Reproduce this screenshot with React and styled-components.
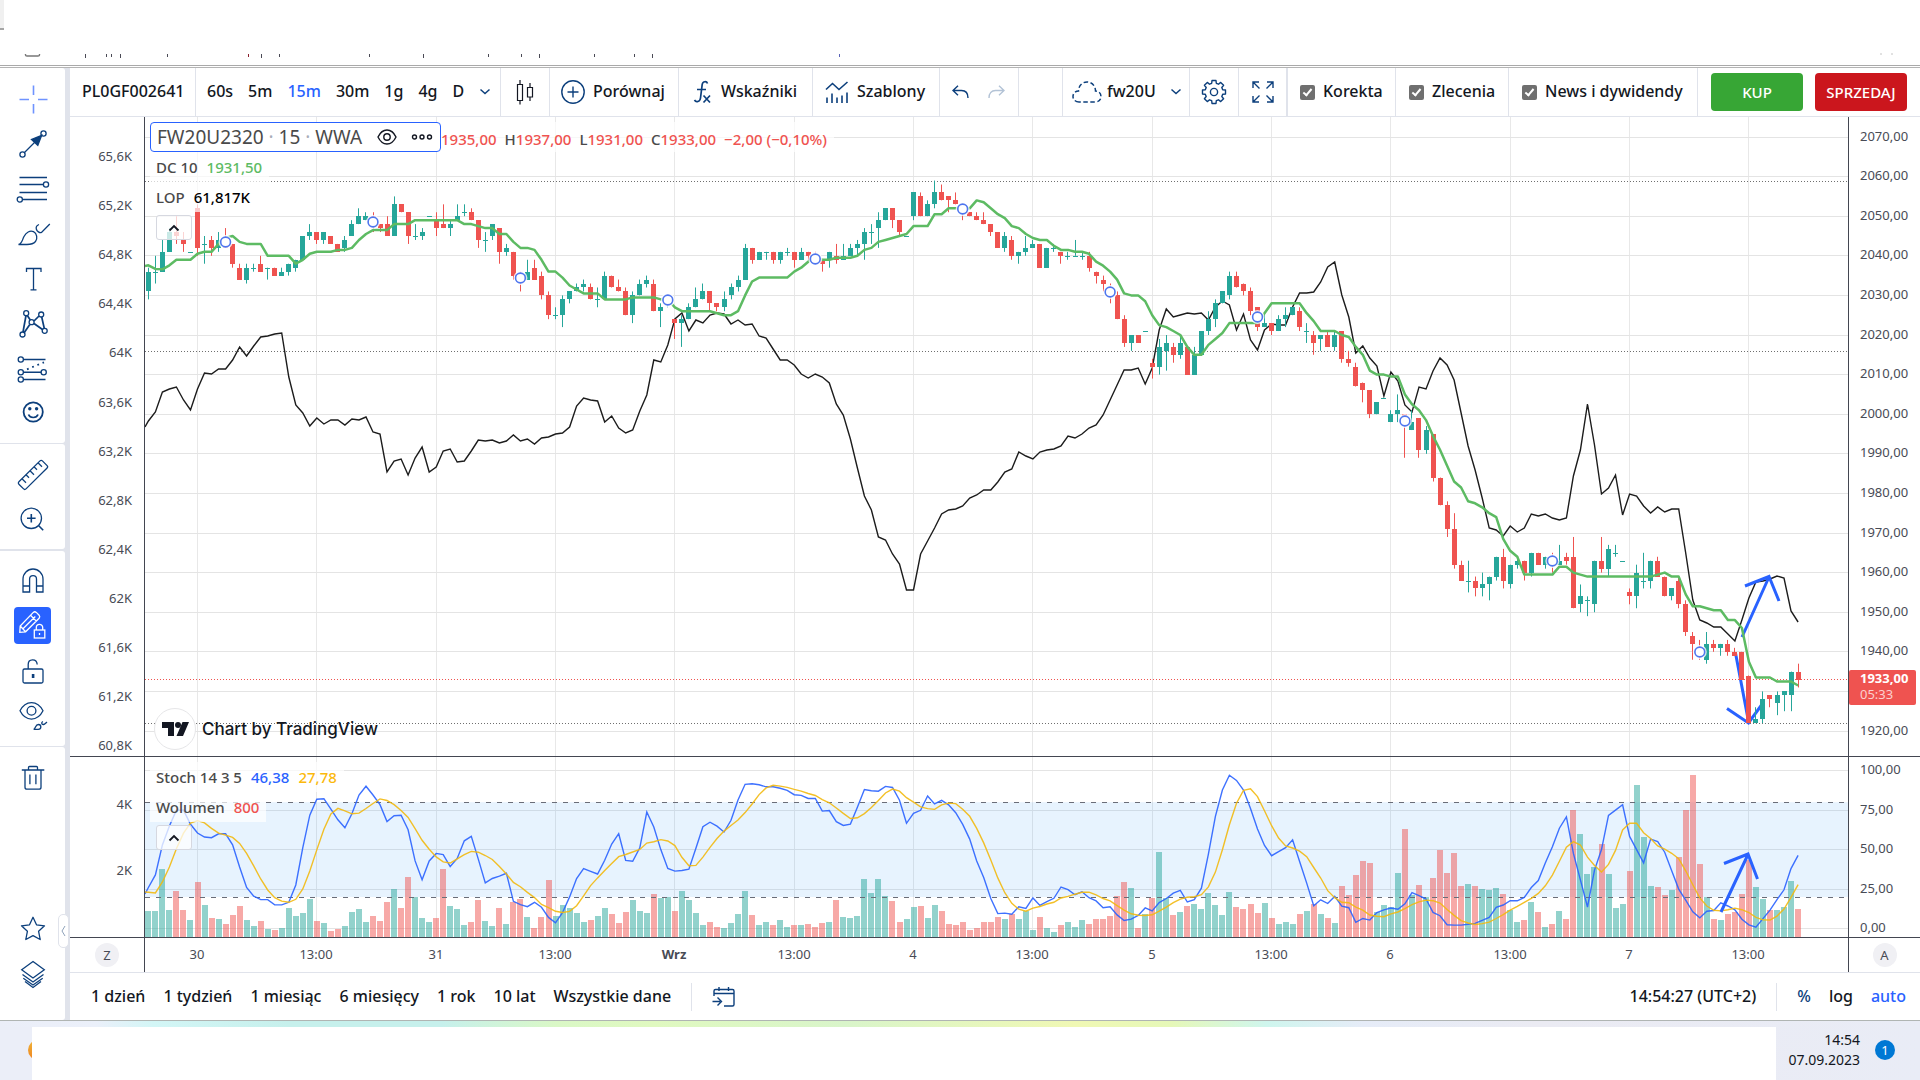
import React from "react";
import styled, { createGlobalStyle, css } from "styled-components";

/* ---------- market data ---------- */

// open, high, low, close for every 15-minute bar
const CANDLES = `
2031 2037 2029 2036|2036 2040 2033 2036|2036 2044 2036 2041|2041 2047 2041 2046|2046 2050 2043 2045|2044 2046 2041 2043|2041 2041 2041 2041|2052 2053 2040 2042|2043 2045 2038 2043|2044 2045 2040 2042
2042 2046 2041 2044|2044 2047 2042 2042|2043 2043 2037 2038|2037 2038 2034 2034|2034 2038 2033 2037|2037 2038 2036 2037|2038 2040 2036 2036|2037 2037 2034 2037|2037 2037 2035 2035|2035 2037 2035 2036
2036 2038 2035 2038|2037 2039 2036 2039|2039 2045 2039 2045|2045 2048 2044 2046|2046 2046 2043 2044|2044 2046 2043 2046|2045 2045 2043 2043|2043 2043 2041 2041|2042 2045 2041 2044|2045 2049 2045 2048
2048 2052 2048 2050|2049 2051 2049 2050|2050 2051 2046 2048|2048 2048 2046 2047|2048 2050 2045 2045|2045 2055 2045 2053|2053 2053 2051 2051|2051 2051 2043 2045|2045 2048 2044 2045|2045 2047 2044 2046
2050 2050 2050 2050|2049 2051 2045 2047|2048 2053 2047 2047|2047 2049 2045 2048|2049 2053 2049 2050|2051 2053 2050 2051|2051 2052 2049 2049|2049 2049 2042 2044|2044 2046 2041 2044|2045 2048 2044 2048
2047 2047 2038 2041|2041 2043 2040 2042|2041 2041 2034 2035|2035 2036 2031 2034|2034 2039 2034 2036|2037 2039 2034 2034|2035 2036 2029 2030|2030 2031 2024 2025|2025 2027 2024 2025|2025 2030 2022 2029
2029 2031 2028 2031|2031 2033 2031 2032|2032 2034 2031 2033|2032 2033 2029 2029|2029 2032 2027 2029|2029 2036 2029 2035|2035 2035 2032 2032|2032 2034 2031 2031|2031 2032 2025 2025|2025 2031 2023 2030
2030 2034 2030 2033|2033 2035 2032 2034|2033 2034 2026 2026|2026 2028 2022 2027|2029 2030 2027 2029|2024 2024 2019 2023|2023 2025 2017 2024|2024 2028 2024 2027|2027 2032 2027 2029|2029 2033 2029 2031
2031 2031 2026 2028|2028 2028 2026 2027|2027 2031 2026 2029|2030 2033 2029 2032|2032 2035 2031 2034|2034 2043 2034 2042|2042 2042 2038 2039|2039 2041 2039 2041|2041 2041 2039 2041|2041 2041 2038 2039
2039 2041 2038 2041|2041 2042 2040 2041|2041 2041 2037 2039|2039 2042 2039 2041|2041 2041 2039 2040|2040 2041 2039 2039|2039 2039 2036 2038|2039 2041 2037 2041|2040 2043 2038 2039|2039 2043 2039 2040
2040 2043 2040 2042|2042 2044 2040 2043|2043 2047 2039 2046|2046 2048 2043 2046|2047 2051 2042 2049|2049 2052 2049 2052|2052 2052 2047 2049|2049 2049 2045 2046|2045 2045 2045 2045|2050 2056 2049 2056
2055 2056 2050 2050|2050 2054 2050 2053|2053 2059 2052 2056|2056 2058 2054 2054|2055 2055 2051 2054|2054 2056 2053 2053|2052 2053 2049 2051|2051 2051 2050 2050|2050 2051 2049 2049|2049 2051 2048 2048
2048 2048 2045 2046|2046 2046 2042 2042|2042 2046 2041 2045|2044 2045 2039 2040|2040 2041 2038 2041|2041 2045 2040 2042|2042 2044 2042 2043|2043 2043 2037 2037|2037 2042 2037 2042|2042 2043 2041 2042
2041 2041 2038 2040|2040 2041 2039 2040|2040 2044 2040 2040|2040 2041 2039 2040|2040 2041 2036 2037|2036 2036 2033 2035|2034 2035 2031 2033|2032 2033 2028 2030|2030 2031 2024 2024|2024 2025 2017 2018
2018 2020 2016 2020|2020 2020 2018 2018|2021 2021 2021 2021|2013 2014 2009 2012|2012 2019 2010 2017|2016 2020 2011 2018|2017 2018 2013 2015|2015 2020 2014 2018|2017 2017 2010 2010|2010 2017 2010 2015
2015 2021 2015 2021|2021 2026 2020 2024|2024 2029 2022 2028|2028 2031 2028 2031|2030 2036 2029 2035|2035 2036 2032 2032|2033 2033 2030 2031|2031 2032 2025 2026|2027 2027 2021 2022|2022 2025 2022 2023
2023 2023 2020 2021|2021 2025 2021 2024|2024 2027 2022 2025|2025 2027 2025 2027|2026 2027 2021 2022|2021 2023 2018 2021|2020 2021 2015 2018|2019 2020 2016 2020|2020 2021 2017 2017|2017 2021 2016 2020
2021 2021 2013 2014|2014 2016 2012 2013|2012 2013 2007 2007|2008 2008 2003 2006|2006 2006 1999 2000|2000 2003 2000 2003|2004 2004 2004 2004|1998 2001 1998 2000|2000 2005 1998 2001|2000 2000 1989 1998
1996 2001 1996 1998|1999 1999 1989 1991|1991 1997 1990 1996|1995 1995 1983 1984|1984 1984 1977 1977|1977 1978 1969 1971|1971 1975 1961 1962|1962 1963 1958 1958|1958 1963 1955 1958|1958 1959 1954 1956
1956 1960 1954 1957|1957 1959 1953 1959|1959 1964 1958 1964|1964 1966 1956 1958|1957 1962 1956 1962|1962 1964 1961 1963|1963 1963 1958 1960|1960 1965 1959 1965|1965 1965 1962 1962|1962 1964 1961 1964
1964 1965 1960 1962|1962 1967 1962 1963|1964 1965 1962 1963|1964 1969 1951 1951|1952 1957 1950 1954|1953 1954 1949 1953|1952 1963 1950 1963|1963 1969 1960 1961|1961 1967 1959 1966|1965 1967 1964 1965
1963 1963 1963 1963|1955 1956 1952 1954|1954 1962 1951 1960|1958 1965 1956 1958|1958 1963 1956 1963|1963 1964 1959 1959|1959 1959 1954 1954|1954 1956 1953 1956|1958 1959 1951 1952|1952 1953 1944 1945
1944 1945 1938 1942|1941 1943 1938 1939|1938 1945 1937 1942|1942 1943 1940 1941|1941 1942 1939 1942|1942 1943 1939 1940|1940 1941 1939 1939|1940 1940 1933 1933|1934 1934 1922 1922|1922 1926 1922 1923
1923 1930 1922 1928|1929 1929 1926 1928|1927 1930 1924 1929|1929 1930 1925 1930|1929 1935 1925 1935|1935 1937 1931 1933`
  .trim()
  .split(/[|\n]/)
  .map((bar) => bar.trim().split(" ").map(Number));

const nums = (text) => text.trim().split(/\s+/).map(Number);

// open-interest curve, vertical position on its own left-hand scale
const LOP = nums(`
421 412 392 389 387 400 410 389 373 374
369 369 360 347 356 346 337 336 334 333
377 405 413 426 418 424 420 420 425 419
420 417 432 434 472 461 459 475 458 447
472 467 451 449 462 461 451 440 441 440
443 441 435 441 439 444 438 437 434 433
427 406 398 400 401 422 416 428 433 430
411 395 360 362 345 319 313 331 320 323
315 313 314 324 320 325 324 336 338 349
360 360 365 374 378 374 377 383 404 415
439 468 496 510 537 540 554 564 590 590
554 541 528 514 510 509 506 498 495 490
490 482 472 469 452 456 459 452 450 449
446 436 438 434 428 425 415 400 385 370
370 368 384 368 330 309 317 315 313 314
313 320 307 301 305 330 314 340 350 330
324 325 325 307 293 293 292 282 267 262
295 317 353 346 358 366 396 372 381 405
412 387 389 371 358 365 380 413 446 470
498 528 530 536 526 532 528 514 516 514
518 520 518 476 450 404 445 494 488 475
515 494 496 506 513 507 512 509 509 553
600 620 623 627 627 634 641 620 598 582
581 579 576 578 611 622`);

const VOLUME = nums(`
26 26 68 27 46 27 17 55 32 19
18 13 22 31 17 11 16 8 7 9
29 21 24 38 16 14 6 8 11 25
28 15 21 16 35 48 29 60 40 19
15 19 68 31 28 12 15 37 16 11
29 13 35 38 20 9 20 57 21 32
29 24 15 17 21 29 23 14 25 37
26 24 43 39 40 26 46 37 24 12
15 10 9 14 23 46 22 12 15 12
17 10 12 12 13 10 14 15 37 20
19 21 58 44 58 41 36 15 18 30
31 19 32 26 13 12 15 7 9 15
15 20 18 23 18 26 7 20 9 5
12 15 10 17 13 18 18 21 41 55
49 9 23 39 85 39 22 25 31 33
28 44 32 22 45 30 28 33 24 34
19 13 15 13 23 26 33 23 19 14
51 42 62 76 74 25 32 30 64 108
42 52 40 59 87 64 84 51 53 51
48 47 49 43 27 15 17 35 25 10
13 26 18 127 103 63 70 93 63 29
33 66 152 100 51 50 42 47 80 127
162 73 40 18 17 23 25 43 77 50
38 27 27 30 56 28`);

const DC_HEAD = [2037.6, 2036.7, 2036.6, 2037.6, 2039, 2039, 2039, 2040.5, 2041];
const K_HEAD = [26, 34, 53, 65, 75, 75, 66, 60.5, 58, 57.5, 60, 60, 53, 39, 26, 20.5];
const D_HEAD = [23, 22.5, 29.5, 39];

const SESSION_MARKS = [
  [11, 242], [32, 222], [53, 278], [74, 300], [95, 259], [116, 209],
  [137, 292], [158, 317], [179, 421], [200, 561], [221, 652],
];

/* ---------- scales and indicators ---------- */

const TOP = 117;
const LEFT = 145;
const PANE_TOP = 757;
const barX = (i) => 197.5 - LEFT + (i - 7) * 7.02;
const priceY = (p) => 20 + (2070 - p) * 3.96;
const stochY = (v) => 171.6 - v * 1.58;

const highest = (i, n) => Math.max(...CANDLES.slice(i - n + 1, i + 1).map((c) => c[1]));
const lowest = (i, n) => Math.min(...CANDLES.slice(i - n + 1, i + 1).map((c) => c[2]));
const mean = (list) => list.reduce((a, b) => a + b, 0) / list.length;

const DC = CANDLES.map((_, i) => (i < 9 ? DC_HEAD[i] : (highest(i, 10) + lowest(i, 10)) / 2));
const RAW_K = CANDLES.map((c, i) => {
  if (i < 13) return 0;
  const lo = lowest(i, 14);
  return ((c[3] - lo) / (highest(i, 14) - lo)) * 100;
});
const K = CANDLES.map((_, i) => (i < 16 ? K_HEAD[i] : mean(RAW_K.slice(i - 2, i + 1))));
const D = CANDLES.map((_, i) => (i < 4 ? D_HEAD[i] : mean(K.slice(i - 4, i + 1))));

const toPoints = (list, fy) => list.map((v, i) => `${barX(i).toFixed(1)},${fy(v).toFixed(1)}`).join(" ");

const UP = "#26a69a";
const DOWN = "#ef5350";
const BLUE = "#2962ff";
const NAVY = "#0c3f7c";
const INK = "#131722";
const RULE = "#e0e3eb";
const AXIS = "#434651";

const GRID_X = Array.from({ length: 14 }, (_, n) => Math.floor(barX(7 + 17 * n)) + 0.5);
const TIMES = ["30", "13:00", "31", "13:00", "Wrz", "13:00", "4", "13:00", "5", "13:00", "6", "13:00", "7", "13:00"];
const PRICES = Array.from({ length: 16 }, (_, n) => 2070 - n * 10);
const LOP_LABELS = ["65,6K", "65,2K", "64,8K", "64,4K", "64K", "63,6K", "63,2K", "62,8K", "62,4K", "62K", "61,6K", "61,2K", "60,8K"];
const PERCENTS = [100, 75, 50, 25, 0];

/* ---------- styles ---------- */

const GlobalStyle = createGlobalStyle`
  *, *::before, *::after { box-sizing: border-box; }
  body { margin: 0; background: #fff; }
  body, button, input { font-family: "Noto Sans", "Open Sans", sans-serif; }
  button { border: 0; margin: 0; padding: 0; background: none; color: inherit; cursor: pointer; }
  svg { display: block; }
`;

const Page = styled.div`
  display: flex;
  flex-direction: column;
  min-height: 100vh;
  color: ${INK};
`;

const BrowserStrip = styled.header`
  height: 68px;
  border-bottom: 1px solid #b4b4b4;
  overflow: hidden;
`;

const StripInner = styled.div`
  height: 66px;
  border-bottom: 1px solid #a9a9a9;
`;

const Workspace = styled.main`
  flex: 1;
  display: flex;
`;

const SideBar = styled.nav`
  flex: none;
  width: 70px;
  position: relative;
  display: flex;
  flex-direction: column;
  background: ${RULE};
  border-right: 5px solid ${RULE};
`;

const ToolGroup = styled.div`
  display: flex;
  flex-direction: column;
  align-items: center;
  padding: ${(p) => p.$pad || "8px 0 7px"};
  margin-bottom: ${(p) => p.$gap || 0}px;
  background: #fff;
  border-radius: 0 3px 3px 0;
  ${(p) => p.$grow && css`
    flex: 1;
    padding-bottom: 24px;
  `}
`;

const ToolSpacer = styled.div`
  flex: 1;
`;

const ToolButton = styled.button`
  display: grid;
  place-items: center;
  width: 65px;
  height: 45px;
`;

const ToolFace = styled.span`
  display: flex;
  align-items: center;
  justify-content: center;
  width: 37px;
  height: 37px;
  border-radius: 4px;
  background: ${(p) => (p.$active ? BLUE : "transparent")};
`;

const ToolSvg = styled.svg`
  flex: none;
  width: 40px;
  height: 40px;
  fill: none;
  stroke: ${(p) => p.$color || NAVY};
  stroke-width: 1.3;
`;

const CollapseHandle = styled.button`
  position: absolute;
  right: -4px;
  bottom: 72px;
  display: grid;
  place-items: center;
  width: 11px;
  height: 34px;
  background: #fff;
  border: 1px solid ${RULE};
  border-radius: 5px;
`;

const Board = styled.section`
  flex: 1;
  min-width: 0;
  display: flex;
  flex-direction: column;
`;

const TopBar = styled.div`
  display: flex;
  height: 49px;
  border-bottom: 1px solid ${RULE};
  font-size: 16px;
  font-weight: 500;
  line-height: 24px;
`;

const Section = styled.div`
  flex: none;
  display: flex;
  align-items: center;
  width: ${(p) => p.$w}px;
  padding-left: ${(p) => p.$pad || 0}px;
  gap: ${(p) => p.$gap || 8}px;
  justify-content: ${(p) => (p.$center ? "center" : "flex-start")};
  border-right: ${(p) => p.$edge || 1}px solid ${RULE};
  white-space: nowrap;
`;

const BarButton = styled.button`
  display: flex;
  align-items: center;
  gap: ${(p) => p.$gap || 8}px;
  font-size: 16px;
  font-weight: 500;
  line-height: 24px;
  white-space: nowrap;
  color: ${(p) => (p.$on ? BLUE : p.$navy ? NAVY : INK)};
`;

const Caption = styled.span`
  padding-bottom: 2px;
`;

const BarSvg = styled.svg`
  flex: none;
  fill: none;
  stroke: ${(p) => p.$color || NAVY};
  stroke-width: 1.4;
`;

const CheckLabel = styled.label`
  display: flex;
  align-items: center;
  gap: 8px;
`;

const CheckBox = styled.input`
  appearance: none;
  display: grid;
  place-items: center;
  width: 15px;
  height: 15px;
  margin: 0;
  border-radius: 2px;
  background: #6f6f6f;
  &:checked::after {
    content: "";
    width: 5px;
    height: 9px;
    margin-bottom: 2px;
    border: solid #fff;
    border-width: 0 2px 2px 0;
    transform: rotate(40deg);
  }
`;

const Trade = styled.div`
  display: flex;
  flex: 1;
  align-items: center;
  gap: 12px;
  padding: 0 12px 0 13px;
`;

const TradeButton = styled.button`
  flex: 1;
  height: 38px;
  max-width: 92px;
  border-radius: 4px;
  color: #fff;
  font-size: 15px;
  font-weight: 500;
  background: ${(p) => (p.$sell ? "#cb161d" : "#37a635")};
`;

const ChartGrid = styled.div`
  flex: 1;
  display: grid;
  grid-template-columns: 75px minmax(0, 1fr) 72px;
  grid-template-rows: minmax(640px, 1fr) 181px 34px;
`;

const Cell = styled.div`
  position: relative;
  overflow: hidden;
  border-bottom: ${(p) => (p.$last ? "0" : `1px solid ${AXIS}`)};
  border-right: ${(p) => (p.$side === "left" ? `1px solid ${AXIS}` : "0")};
  border-left: ${(p) => (p.$side === "right" ? `1px solid ${AXIS}` : "0")};
`;

const Plot = styled.svg`
  width: 100%;
  height: ${(p) => p.$h}px;
`;

const AxisText = styled.text`
  font-family: "Noto Sans", sans-serif;
  font-size: 13px;
  font-weight: ${(p) => (p.$bold ? 700 : 400)};
  fill: ${(p) => p.$fill || "#484b55"};
`;

const Legend = styled.div`
  position: absolute;
  top: 5px;
  left: 5px;
  display: flex;
  flex-direction: column;
  align-items: flex-start;
`;

const LegendRow = styled.div`
  display: flex;
  align-items: center;
  gap: 9px;
  height: 30px;
  padding: 0 7px 0 6px;
  font-size: 15px;
  font-weight: 500;
  line-height: 20px;
  color: #4a4a4a;
  background: rgba(255, 255, 255, 0.7);
  white-space: nowrap;
  ${(p) => p.$first && css`
    padding-left: 0;
    gap: 0;
  `}
`;

const SymbolBox = styled.div`
  display: flex;
  align-items: center;
  width: 291px;
  height: 30px;
  padding: 0 7px 0 6px;
  border: 1px solid ${BLUE};
  border-radius: 4px;
  background: #fff;
  font-size: 19px;
  font-weight: 400;
  line-height: 24px;
`;

const SymbolName = styled.span`
  flex: 1;
  i {
    font-style: normal;
    color: #a9adb8;
  }
`;

const IconButton = styled.button`
  display: grid;
  place-items: center;
  margin-left: 14px;
`;

const Quotes = styled.div`
  display: flex;
  gap: 8px;
  padding-top: 4px;
`;

const Value = styled.span`
  color: ${(p) => p.$c || DOWN};
`;

const Chevron = styled.button`
  display: grid;
  place-items: center;
  width: 36px;
  height: 25px;
  margin: 3px 0 0 6px;
  border: 1px solid #d6d8e0;
  border-radius: 3px;
  background: rgba(255, 255, 255, 0.75);
`;

const Brand = styled.a`
  position: absolute;
  left: 9px;
  bottom: 6px;
  display: flex;
  align-items: center;
  gap: 6px;
  color: ${INK};
  font: 500 17px/24px "Inter", sans-serif;
  text-decoration: none;
`;

const BrandMark = styled.span`
  display: grid;
  place-items: center;
  width: 42px;
  height: 42px;
  border: 1px solid #e6e6e8;
  border-radius: 50%;
  background: #fff;
`;

const AxisButton = styled.button`
  display: block;
  width: 24px;
  height: 24px;
  margin: 5px auto 0;
  border-radius: 50%;
  background: #f0f0f4;
  color: #484b55;
  font-size: 13px;
`;

const BottomBar = styled.div`
  display: flex;
  align-items: center;
  height: 48px;
  padding: 0 14px 0 21px;
  border-top: 1px solid ${RULE};
`;

const Ranges = styled.div`
  display: flex;
  gap: 18px;
`;

const Divider = styled.span`
  width: 1px;
  height: 28px;
  margin: 0 20px;
  background: ${RULE};
`;

const Spacer = styled.span`
  flex: 1;
`;

const TaskBar = styled.footer`
  display: flex;
  align-items: stretch;
  height: 60px;
  padding-top: 6px;
  border-top: 1px solid #b0b5b3;
  background: linear-gradient(90deg, #ebeef8 0, #ebf0fa 5%, #d3f6f6 8%, #c6f0ec 15%, #c6f0ec 23%, #daf8c6 29%, #e0f9c0 34%, #d9f5ca 44%, #f0f8b4 56%, #e6f8b8 61%, #cff6ee 66%, #e6ecf8 71%, #ebebf3 80%, #e9ecf6 100%);
`;

const TaskStart = styled.div`
  flex: none;
  display: flex;
  align-items: center;
  width: 32px;
  padding: 0 0 7px 28px;
  overflow: hidden;
  background: #ebeef8;
`;

const AppDot = styled.span`
  flex: none;
  width: 20px;
  height: 20px;
  border-radius: 50%;
  background: linear-gradient(#eeb53a, #f0831f);
`;

const TaskBlank = styled.div`
  flex: 1;
  background: #fff;
`;

const TaskTray = styled.div`
  flex: none;
  display: flex;
  align-items: center;
  justify-content: flex-end;
  gap: 15px;
  width: 144px;
  padding: 0 25px 8px 0;
`;

const Clock = styled.div`
  font-size: 14px;
  line-height: 20px;
  text-align: right;
`;

const Badge = styled.span`
  display: grid;
  place-items: center;
  width: 20px;
  height: 20px;
  border-radius: 50%;
  background: #0078d4;
  color: #fff;
  font-size: 13px;
`;

/* ---------- side bar icons ---------- */

const ruler = [0, 1, 2, 3, 4];

const TOOLS = {
  cross: <path d="M6.5 20.5H16M25 20.5h9.500M20.500 6.500v9.500M20.500 25v9.500" strokeWidth="1.600" />,
  trend: (
    <>
      <circle cx="9.500" cy="30.500" r="2.600" /><circle cx="30.500" cy="9.500" r="2.600" />
      <path d="M11.500 28.500L23 17" /><path d="M28.700 11.300L18.500 15.500l6.300 5.800z" fill={NAVY} />
    </>
  ),
  fib: (
    <>
      <path d="M6.500 8.500H34M6.500 15.500h23.700M6.500 23.500H34M9.500 30.500H34" strokeWidth="1.600" />
      <circle cx="33" cy="15.500" r="2.600" /><circle cx="6.800" cy="30.500" r="2.600" />
    </>
  ),
  brush: <path d="M5.500 30.500c3.500-.7 3.500-4 5.500-8s6-6.500 9.500-4.800 4.300 6.800 2 9.800c-2.300 2.700-5 3-8.500 3zM26 10.500c-2 .8-3.200 2.300-2.700 4.500.5 2.400 3.300 4.200 5.200 3.500L36.800 10" />,
  text: <path d="M13.500 13V9.500h14.500V13M20.500 9.500v21.300M17.500 30.800h6" />,
  pattern: (
    <>
      <path d="M13 11.500L10 28M14.300 11.500l3 4.500M11.300 28.500l5.500-8M21 17l5-5M28.700 13l2.600 11.500M21 19.500l8.500 6" strokeWidth="1.700" />
      <circle cx="13.200" cy="9.200" r="2.500" /><circle cx="28.200" cy="10.500" r="2.500" /><circle cx="18.600" cy="18.200" r="2.500" />
      <circle cx="9.500" cy="30.500" r="2.500" /><circle cx="31.700" cy="26.800" r="2.500" />
    </>
  ),
  forecast: (
    <>
      <path d="M10.500 10.500h22M10.500 23.300h17.800M10.500 30.500h22" strokeWidth="1.500" />
      <path d="M14 20.300l17-7" strokeWidth="1.800" strokeDasharray="1.800 3.800" />
      <circle cx="7.800" cy="10.500" r="2.600" /><circle cx="7.800" cy="23.300" r="2.600" />
      <circle cx="30.700" cy="23.300" r="2.600" /><circle cx="7.800" cy="30.500" r="2.600" />
    </>
  ),
  smile: (
    <>
      <circle cx="20.200" cy="18" r="9.600" strokeWidth="1.800" />
      <circle cx="16.800" cy="14.800" r="1.700" fill={NAVY} stroke="none" /><circle cx="23.600" cy="14.800" r="1.700" fill={NAVY} stroke="none" />
      <path d="M15.500 20.500c1.500 4 8 4 9.500 0" strokeWidth="1.700" />
    </>
  ),
  ruler: (
    <>
      <path d="M27 5.900q1.200-1.200 2.400 0l4.700 4.700q1.200 1.200 0 2.400L13 33.900q-1.200 1.200-2.400 0l-4.700-4.700q-1.200-1.200 0-2.400z" />
      {ruler.map((n) => <path key={n} d={`M${9 + n * 4} ${23.7 - n * 4}l${n % 2 ? 3 : 4} ${n % 2 ? 3 : 4}`} />)}
    </>
  ),
  zoom: <><circle cx="18.300" cy="18.300" r="10.200" /><path d="M14 18.300h8.600M18.300 14v8.600M25.500 25.500l4.700 4.700" strokeWidth="1.600" /></>,
  magnet: <path d="M10 31V18a10 10 0 0 1 20 0v13h-6.500V18a3.400 3.400 0 0 0-6.900 0v13zM10 25h6.600M23.500 25H30" />,
  pencil: (
    <>
      <path d="M6.800 26.300l.4-6.300L20.300 6.400q1.500-1.300 3 0l2.800 2.800q1.300 1.500 0 3L12.600 25.800zM7.200 20l5.400 5.800M17.500 9.300l5.800 5.800M10 22.800L22.300 10.500" />
      <rect x="21.300" y="24" width="10.500" height="8" /><path d="M23.300 24v-2.500a3.200 3.200 0 0 1 6.400 0V24M26.500 27v2" />
    </>
  ),
  lock: <><rect x="10" y="18" width="20" height="14" rx="1.500" /><path d="M15.200 18v-4.500c0-5.800 8.500-6.300 9 0" /><path d="M20.100 23v4" strokeWidth="2.600" /></>,
  eye: (
    <>
      <path d="M7 14.800c5.500-11 17.500-11 23 0-5.500 11-17.500 11-23 0z" /><circle cx="18.500" cy="14.800" r="4.400" />
      <path d="M20.700 33.300c2-.8 1.500-4.800 4.800-4.800 3 0 3.300 4.800-.3 4.800zM30 25.500c-2 .7-1.500 3.200.5 3 1.300-.2 2.200-1.500 3.500-2.500" />
    </>
  ),
  trash: <path d="M8.800 12h22.500M15.500 12V9.500q0-1 1-1h7q1 0 1 1V12M12 12v17.200q0 2 2 2h12q2 0 2-2V12M16.900 16.500v9.800M22.900 16.500v9.800" />,
  star: <path d="M20 8.300l3.500 7.500 8 1-5.900 5.500 1.600 8.200L20 26.600l-7.200 3.900 1.600-8.200-5.900-5.500 8-1z" strokeLinejoin="round" />,
  layers: <path d="M20 7.500L31.300 15.800 20 24 8.700 15.800zM9.500 20.500L20 28l10.500-7.500M10.300 24.300L20 31l9.700-6.700M12 27.500l8 6 8-6" />,
};

const Tool = ({ name, label, active, color }) => (
  <ToolButton type="button" aria-label={label}>
    <ToolFace $active={active}>
      <ToolSvg viewBox="0 0 40 40" $color={color} aria-hidden="true">{TOOLS[name]}</ToolSvg>
    </ToolFace>
  </ToolButton>
);

/* ---------- top bar icons ---------- */

const gearPath = Array.from({ length: 8 }, (_, n) => {
  const at = (deg, r) => {
    const a = ((n * 45 + deg) * Math.PI) / 180;
    return `${(13 + r * Math.cos(a)).toFixed(1)} ${(13 + r * Math.sin(a)).toFixed(1)}`;
  };
  return `${n ? "L" : "M"}${at(-15, 9)}L${at(-10, 11.7)}L${at(10, 11.7)}L${at(15, 9)}`;
}).join("") + "z";

const DownIcon = () => (
  <BarSvg width="12" height="8" viewBox="0 0 12 8"><path d="M1.500 1.500L6 5.500l4.500-4" strokeWidth="1.500" /></BarSvg>
);

const UpIcon = () => (
  <BarSvg width="12" height="8" viewBox="0 0 12 8" $color={INK}><path d="M1.500 6.500L6 2l4.500 4.500" strokeWidth="1.800" /></BarSvg>
);

const INTERVALS = ["60s", "5m", "15m", "30m", "1g", "4g", "D"];
const RANGES = ["1 dzień", "1 tydzień", "1 miesiąc", "6 miesięcy", "1 rok", "10 lat", "Wszystkie dane"];

const TopToolbar = () => (
  <TopBar>
    <Section $w={126} $pad={12}><BarButton type="button"><Caption>PL0GF002641</Caption></BarButton></Section>
    <Section $w={305} $pad={11} $gap={15}>
      {INTERVALS.map((t) => <BarButton type="button" key={t} $on={t === "15m"}><Caption>{t}</Caption></BarButton>)}
      <BarButton type="button" aria-label="Więcej interwałów"><DownIcon /></BarButton>
    </Section>
    <Section $w={49} $center>
      <BarButton type="button" aria-label="Typ wykresu">
        <BarSvg width="18" height="26" viewBox="0 0 18 26" $color={INK}>
          <path d="M1.500 5.500h5v16h-5zM4 5.500V1M4 21.500V25.500M11.500 8.500h5v9.500h-5zM14 8.500V4M14 18v4" strokeWidth="1.200" />
        </BarSvg>
      </BarButton>
    </Section>
    <Section $w={129} $pad={11}>
      <BarButton type="button">
        <BarSvg width="24" height="24" viewBox="0 0 24 24"><circle cx="12" cy="12" r="11.200" /><path d="M6.500 12h11M12 6.500v11" /></BarSvg>
        <Caption>Porównaj</Caption>
      </BarButton>
    </Section>
    <Section $w={134} $pad={14}>
      <BarButton type="button">
        <BarSvg width="20" height="24" viewBox="0 0 20 24">
          <path d="M14.500 3.500c-.8-2.500-4.700-2.500-5.300.8L7.500 18c-.5 4-4.500 4.800-6 2M4 9.500h9M10.500 15.500l6.500 7M17 15.500l-6.500 7" strokeWidth="1.700" />
        </BarSvg>
        <Caption>Wskaźniki</Caption>
      </BarButton>
    </Section>
    <Section $w={127} $pad={12}>
      <BarButton type="button">
        <BarSvg width="24" height="24" viewBox="0 0 24 24">
          <path d="M1 9.500l6.500-6 6.500 6L22.500 2M2 17.500V23M7 13.500V23M12 17.500V23M17 15.500V23M22 12.500V23" strokeWidth="1.600" />
        </BarSvg>
        <Caption>Szablony</Caption>
      </BarButton>
    </Section>
    <Section $w={79} $pad={12} $gap={17}>
      <BarButton type="button" aria-label="Cofnij">
        <BarSvg width="18" height="14" viewBox="0 0 18 14"><path d="M6 .800L1 5.500l5 4.700M1 5.500h8.500c4 0 6.500 2.500 6.500 7.500" /></BarSvg>
      </BarButton>
      <BarButton type="button" aria-label="Ponów">
        <BarSvg width="18" height="14" viewBox="0 0 18 14" $color="#b3c3d6"><path d="M12 .800l5 4.700-5 4.700M17 5.500H8.500C4.500 5.500 2 8 2 13" /></BarSvg>
      </BarButton>
    </Section>
    <Section $w={44} />
    <Section $w={127} $pad={9} $gap={14}>
      <BarButton type="button" $gap={5}>
        <BarSvg width="30" height="22" viewBox="0 0 30 22">
          <path d="M7 21C3.500 21 1 18.700 1 15.500S3.500 10 6.500 10C6.500 5 10 1 15 1s8.500 4 8.500 9c3 0 5.500 2 5.500 5.500S26.500 21 23 21z" strokeDasharray="4.500 2.500" strokeWidth="1.500" />
        </BarSvg>
        <Caption>fw20U</Caption>
      </BarButton>
      <BarButton type="button" aria-label="Układy"><DownIcon /></BarButton>
    </Section>
    <Section $w={49} $center>
      <BarButton type="button" aria-label="Ustawienia">
        <BarSvg width="26" height="26" viewBox="0 0 26 26"><path d={gearPath} strokeLinejoin="round" /><circle cx="13" cy="13" r="3.600" /></BarSvg>
      </BarButton>
    </Section>
    <Section $w={49} $center $edge={2}>
      <BarButton type="button" aria-label="Pełny ekran">
        <BarSvg width="22" height="22" viewBox="0 0 22 22">
          <path d="M1 7V1h6M1 1l6.500 6.500M15 1h6v6M21 1l-6.500 6.500M1 15v6h6M1 21l6.500-6.500M21 15v6h-6M21 21l-6.500-6.500" />
        </BarSvg>
      </BarButton>
    </Section>
    <Section $w={108} $pad={12}><CheckLabel><CheckBox type="checkbox" defaultChecked /><Caption>Korekta</Caption></CheckLabel></Section>
    <Section $w={113} $pad={13}><CheckLabel><CheckBox type="checkbox" defaultChecked /><Caption>Zlecenia</Caption></CheckLabel></Section>
    <Section $w={189} $pad={13}><CheckLabel><CheckBox type="checkbox" defaultChecked /><Caption>News i dywidendy</Caption></CheckLabel></Section>
    <Trade>
      <TradeButton type="button">KUP</TradeButton>
      <TradeButton type="button" $sell>SPRZEDAJ</TradeButton>
    </Trade>
  </TopBar>
);

/* ---------- chart panes ---------- */

const Verticals = ({ h }) => GRID_X.map((x) => <path key={x} d={`M${x} 0V${h}`} stroke="#e8e8e8" />);

const PricePlot = () => (
  <Plot $h={639} role="img" aria-label="FW20U2320">
    <Verticals h={639} />
    {PRICES.map((p) => <path key={p} d={`M0 ${Math.floor(priceY(p)) + 0.5}h1703`} stroke="#e4e4e4" />)}
    {[2059, 2016, 1922].map((p) => (
      <path key={p} d={`M0 ${Math.round(priceY(p)) + 0.5}h1703`} stroke="#6f6f6f" strokeDasharray="1 2" />
    ))}
    <path d={`M0 ${Math.floor(priceY(1933)) + 0.5}h1703`} stroke={DOWN} strokeDasharray="1 2" />
    <polyline points={`0,${427 - TOP} ` + toPoints(LOP, (y) => y - TOP)} fill="none" stroke="#1c1c1c" strokeWidth="1.400" />
    <g fill="none" stroke={BLUE} strokeWidth="3">
      <path d="M1597 520l27-60M1600 469l24-9.500L1634 484" />
      <path d="M1590.500 536l13 68.500M1582 591.500l21.500 14.500L1618 586" />
    </g>
    {CANDLES.map(([o, h, l, c], i) => {
      const color = c >= o ? UP : DOWN;
      const x = Math.round(barX(i) - 0.5);
      const top = Math.round(priceY(Math.max(o, c)));
      const height = Math.max(1, Math.round(priceY(Math.min(o, c))) - top);
      return (
        <g key={i} fill={color}>
          <rect x={x} y={priceY(h)} width="1" height={(h - l) * 3.96} />
          <rect x={x - 2} y={top} width="5" height={height} />
        </g>
      );
    })}
    <polyline points={`0,149 ` + toPoints(DC, priceY)} fill="none" stroke="#5dbb63" strokeWidth="2.500" strokeLinejoin="round" />
    {SESSION_MARKS.map(([i, y]) => (
      <g key={i} fill="#fff">
        <circle cx={barX(i)} cy={y - TOP} r="7" fillOpacity="0.800" />
        <circle cx={barX(i)} cy={y - TOP} r="4.900" stroke="#4f76ee" strokeWidth="1.600" />
      </g>
    ))}
  </Plot>
);

const StochPlot = () => (
  <Plot $h={180} role="img" aria-label="Stoch">
    <Verticals h={180} />
    {PERCENTS.map((v) => <path key={v} d={`M0 ${Math.floor(stochY(v)) + 0.5}h1703`} stroke="#e4e4e4" />)}
    <rect y={stochY(80)} width="1703" height={60 * 1.58} fill="#2196f3" fillOpacity="0.110" />
    {CANDLES.map(([o, , , c], i) => (
      <rect key={i} x={Math.round(barX(i) - 3)} y={180 - VOLUME[i]} width="6" height={VOLUME[i]} fill={c >= o ? UP : DOWN} fillOpacity="0.500" />
    ))}
    {[80, 20].map((v) => (
      <path key={v} d={`M0 ${Math.floor(stochY(v)) + 0.5}h1703`} stroke="#6a6d78" strokeDasharray="5 6" />
    ))}
    <polyline points={`0,137 ` + toPoints(K, stochY)} fill="none" stroke={BLUE} strokeOpacity="0.900" strokeWidth="1.400" />
    <polyline points={`0,135 ` + toPoints(D, stochY)} fill="none" stroke="#f2b90f" strokeOpacity="0.900" strokeWidth="1.400" />
    <path d={`M1576 ${912 - PANE_TOP}l27-57.500M1579 106.500l24-9.500 9.500 25`} fill="none" stroke={BLUE} strokeWidth="3" />
  </Plot>
);

const comma = (v) => v.toFixed(2).replace(".", ",");

const Chart = () => (
  <ChartGrid>
    <Cell $side="left">
      <Plot $h={639}>
        {LOP_LABELS.map((t, n) => <AxisText key={t} x="62" y={44 + Math.round(n * 49.1)} textAnchor="end">{t}</AxisText>)}
      </Plot>
    </Cell>
    <Cell>
      <PricePlot />
      <Legend>
        <LegendRow $first>
          <SymbolBox>
            <SymbolName>FW20U2320 <i>·</i> 15 <i>·</i> WWA</SymbolName>
            <IconButton type="button" aria-label="Ukryj">
              <BarSvg width="20" height="16" viewBox="0 0 20 16" $color={INK}>
                <path d="M1 8c4.500-9.300 13.500-9.300 18 0-4.500 9.300-13.500 9.300-18 0z" /><circle cx="10" cy="8" r="3.200" />
              </BarSvg>
            </IconButton>
            <IconButton type="button" aria-label="Więcej">
              <BarSvg width="22" height="8" viewBox="0 0 22 8" $color={INK}>
                <circle cx="3.500" cy="4" r="2" /><circle cx="11" cy="4" r="2" /><circle cx="18.500" cy="4" r="2" />
              </BarSvg>
            </IconButton>
          </SymbolBox>
          <Quotes>
            <Value>1935,00</Value>
            <span>H<Value>1937,00</Value></span>
            <span>L<Value>1931,00</Value></span>
            <span>C<Value>1933,00</Value></span>
            <Value>−2,00 (−0,10%)</Value>
          </Quotes>
        </LegendRow>
        <LegendRow>DC 10<Value $c="#5dbb63">1931,50</Value></LegendRow>
        <LegendRow>LOP<Value $c="#000">61,817K</Value></LegendRow>
        <Chevron type="button" aria-label="Zwiń"><UpIcon /></Chevron>
      </Legend>
      <Brand href="#tradingview">
        <BrandMark>
          <svg width="27" height="14" viewBox="0 0 27 14" fill={INK} aria-hidden="true">
            <path d="M0 0h12v14H6V6H0zM20.500 0H27l-6 14h-6.500z" /><circle cx="16" cy="3" r="3" />
          </svg>
        </BrandMark>
        Chart by TradingView
      </Brand>
    </Cell>
    <Cell $side="right">
      <Plot $h={639}>
        {PRICES.filter((p) => p !== 1930).map((p) => (
          <AxisText key={p} x="11" y={Math.floor(priceY(p)) + 4}>{comma(p)}</AxisText>
        ))}
        <rect y="553" width="67" height="35" rx="2" fill={DOWN} />
        <AxisText x="11" y="566" $fill="#fff" $bold>1933,00</AxisText>
        <AxisText x="11" y="582" $fill="#fbd0cf">05:33</AxisText>
      </Plot>
    </Cell>

    <Cell $side="left">
      <Plot $h={180}>
        <AxisText x="62" y="52" textAnchor="end">4K</AxisText>
        <AxisText x="62" y="118" textAnchor="end">2K</AxisText>
      </Plot>
    </Cell>
    <Cell>
      <StochPlot />
      <Legend>
        <LegendRow>Stoch 14 3 5<Value $c={BLUE}>46,38</Value><Value $c="#fbb90d">27,78</Value></LegendRow>
        <LegendRow>Wolumen<Value>800</Value></LegendRow>
        <Chevron type="button" aria-label="Zwiń"><UpIcon /></Chevron>
      </Legend>
    </Cell>
    <Cell $side="right">
      <Plot $h={180}>
        {PERCENTS.map((v) => <AxisText key={v} x="11" y={Math.floor(stochY(v)) + 4}>{comma(v)}</AxisText>)}
      </Plot>
    </Cell>

    <Cell $side="left" $last><AxisButton type="button">Z</AxisButton></Cell>
    <Cell $last>
      <Plot $h={34}>
        {TIMES.map((t, n) => (
          <AxisText key={n} x={GRID_X[n] - 0.5} y="21" textAnchor="middle" $bold={t === "Wrz"}>{t}</AxisText>
        ))}
      </Plot>
    </Cell>
    <Cell $side="right" $last><AxisButton type="button">A</AxisButton></Cell>
  </ChartGrid>
);

/* ---------- page ---------- */

const URL_MARKS = [85, 106, 111, 120, 167, 248, 261, 279, 369, 423, 488, 521, 539, 594, 634, 652, 839];

export default function App() {
  return (
    <Page>
      <GlobalStyle />
      <BrowserStrip>
        <StripInner>
          <svg width="100%" height="64" aria-hidden="true">
            <rect width="4" height="28" fill="#f0f0f0" /><rect y="28" width="4" height="2" fill="#a5a5a5" />
            <path d="M25.500 54v1q0 1 1.500 1h11q1.500 0 1.500-1v-1" fill="none" stroke="#777" strokeWidth="1.400" />
            {URL_MARKS.map((x, n) => (
              <rect key={x} x={x} y="54" width="1" height={n % 3 ? 3 : 4} fill={x === 248 ? "#8a1f2d" : x === 839 ? "#5a63b8" : "#4a4a55"} />
            ))}
            <path d="M1880.500 54h1M1891.500 54h1" stroke="#888" />
          </svg>
        </StripInner>
      </BrowserStrip>
      <Workspace>
        <SideBar>
          <ToolGroup $gap={1}>
            <Tool name="cross" label="Kursor" color="#6f93ff" />
            <Tool name="trend" label="Linia trendu" />
            <Tool name="fib" label="Fibonacci" />
            <Tool name="brush" label="Pędzel" />
            <Tool name="text" label="Tekst" />
            <Tool name="pattern" label="Formacje" />
            <Tool name="forecast" label="Prognoza" />
            <Tool name="smile" label="Ikony" />
          </ToolGroup>
          <ToolGroup $gap={2}>
            <Tool name="ruler" label="Miarka" />
            <Tool name="zoom" label="Powiększ" />
          </ToolGroup>
          <ToolGroup $gap={1} $pad="7px 0 8px">
            <Tool name="magnet" label="Magnes" />
            <Tool name="pencil" label="Tryb rysowania" active color="#fff" />
            <Tool name="lock" label="Zablokuj" />
            <Tool name="eye" label="Ukryj rysunki" />
          </ToolGroup>
          <ToolGroup $grow>
            <Tool name="trash" label="Usuń" />
            <ToolSpacer />
            <Tool name="star" label="Ulubione" />
            <Tool name="layers" label="Obiekty" />
          </ToolGroup>
          <CollapseHandle type="button" aria-label="Zwiń pasek">
            <svg width="5" height="12" viewBox="0 0 5 12" fill="none" stroke="#8fa3bb"><path d="M4 1L1 6l3 5" /></svg>
          </CollapseHandle>
        </SideBar>
        <Board>
          <TopToolbar />
          <Chart />
          <BottomBar>
            <Ranges>{RANGES.map((r) => <BarButton type="button" key={r}><Caption>{r}</Caption></BarButton>)}</Ranges>
            <Divider />
            <BarButton type="button" aria-label="Idź do daty">
              <BarSvg width="23" height="20" viewBox="0 0 23 20">
                <path d="M2 9V4q0-1.500 1.500-1.500h17Q22 2.500 22 4v13.500q0 1.500-1.500 1.500H12M2 6.500h20M7 0v4M16.500 0v4M.500 14.500h8M5.500 10.500l4 4-4 4" />
              </BarSvg>
            </BarButton>
            <Spacer />
            <BarButton type="button"><Caption>14:54:27 (UTC+2)</Caption></BarButton>
            <Divider />
            <Ranges>
              <BarButton type="button" $navy><Caption>%</Caption></BarButton>
              <BarButton type="button"><Caption>log</Caption></BarButton>
              <BarButton type="button" $on><Caption>auto</Caption></BarButton>
            </Ranges>
          </BottomBar>
        </Board>
      </Workspace>
      <TaskBar>
        <TaskStart><AppDot /></TaskStart>
        <TaskBlank />
        <TaskTray>
          <Clock>14:54<br />07.09.2023</Clock>
          <Badge>1</Badge>
        </TaskTray>
      </TaskBar>
    </Page>
  );
}
